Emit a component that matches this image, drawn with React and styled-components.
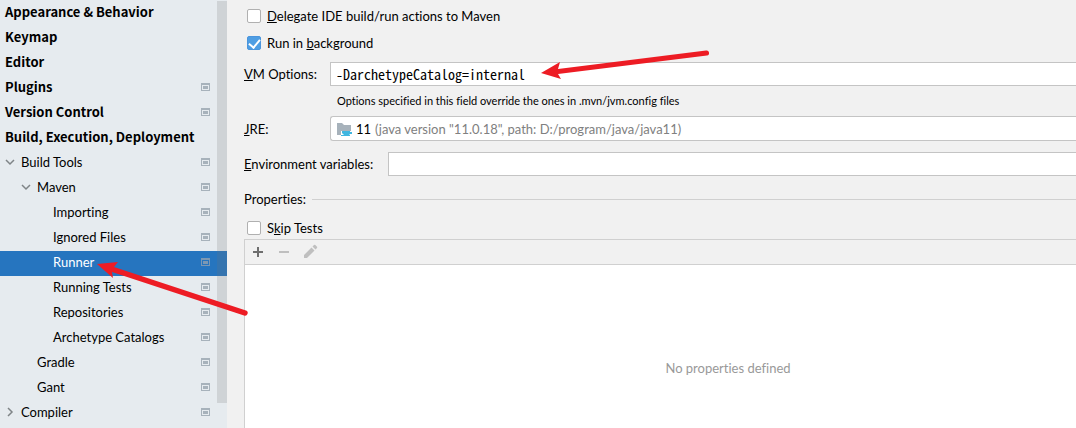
import {useState} from 'react';
import styled, {createGlobalStyle} from 'styled-components';

const GlobalStyle = createGlobalStyle`
    * {
        box-sizing: border-box;
    }

    body {
        margin: 0;
        overflow: hidden;
        background: #f1f1f1;
    }

    body, input, select, button {
        font-family: Lato, 'Noto Sans', sans-serif;
        font-size: 13px;
        font-variant-ligatures: none;
        color: #000;
    }
`;

//--------Layout--------//
const Page = styled.div`
    position: relative;
    display: flex;
    height: 100vh;
    overflow: hidden;
    line-height: 18px;
`;

const Sidebar = styled.nav`
    position: relative;
    flex: 0 0 227px;
    padding-top: 1px;
    background: #e6ebef;
`;

const ScrollThumb = styled.div`
    position: absolute;
    top: 1px;
    right: 0;
    width: 10px;
    height: 402px;
    background: rgba(115, 115, 115, 0.2);
`;

const Main = styled.main`
    flex: 1;
    min-width: 0;
    padding: 7px 0 0 17px;
`;

//--------Tree--------//
const TreeRow = styled.a`
    display: flex;
    align-items: center;
    height: 25px;
    padding: 0 17px 4px ${({$level}) => 5 + $level * 16}px;
    text-decoration: none;
    font-family: ${({$bold}) => ($bold ? "'Noto Sans CJK SC', 'Noto Sans', sans-serif" : 'inherit')};
    font-weight: ${({$bold}) => ($bold ? 700 : 400)};
    color: ${({$selected}) => ($selected ? '#fff' : '#000')};
    background: ${({$selected}) => ($selected ? '#2675bf' : 'transparent')};

    svg:last-child {
        margin-left: auto;
    }
`;

const Chevron = styled.svg`
    width: 10px;
    height: 10px;
    margin-left: -16px;
    margin-right: 6px;
    fill: none;
    stroke: #7f8487;
    stroke-width: 1.5;
`;

//--------Form--------//
const CheckRow = styled.label`
    display: flex;
    align-items: center;
    gap: 6px;
    height: 18px;
    margin-bottom: ${({$gap}) => $gap}px;
    padding-left: 3px;
`;

const Checkbox = styled.input`
    appearance: none;
    display: grid;
    place-items: center;
    width: 14px;
    height: 14px;
    margin: 0;
    border: 1px solid #b0b0b0;
    border-radius: 2px;
    background: #fff;

    &:checked {
        border-color: #4a95dd;
        background: #4f9ee3;
    }

    &:checked::after {
        content: '';
        width: 5px;
        height: 9px;
        margin-top: -2px;
        border: solid #fff;
        border-width: 0 2px 2px 0;
        transform: rotate(40deg);
    }
`;

const Field = styled.div`
    display: flex;
    align-items: center;
    margin-bottom: ${({$gap}) => $gap || 0}px;
`;

const Label = styled.label`
    flex: 0 0 ${({$wide}) => ($wide ? 144 : 86)}px;
`;

const TextInput = styled.input`
    flex: 1;
    min-width: 0;
    height: 24px;
    padding: 0 5px;
    border: 1px solid #c4c4c4;
    border-right: none;
    outline: none;
    background: #fff;
    font-family: 'Noto Sans Mono CJK SC', 'DejaVu Sans Mono', monospace;
    font-size: ${({$code}) => ($code ? 14 : 13)}px;
`;

const Hint = styled.p`
    height: 30px;
    margin: 0 0 0 93px;
    padding-top: 6px;
    font-size: 11px;
`;

const Combo = styled.div`
    display: flex;
    flex: 1;
    align-items: center;
    gap: 4px;
    height: 25px;
    padding-left: 5px;
    border: 1px solid #c4c4c4;
    border-right: none;
    border-radius: 3px 0 0 3px;
    background: #fff;
`;

const Select = styled.select`
    appearance: none;
    flex: 1;
    min-width: 0;
    padding: 0;
    border: none;
    outline: none;
    background: transparent;
    color: #808080;
`;

const SectionTitle = styled.h2`
    display: flex;
    align-items: center;
    gap: 6px;
    height: 18px;
    margin: 0 0 11px;
    font-size: 13px;
    font-weight: 400;

    &::after {
        content: '';
        flex: 1;
        height: 1px;
        background: #d0d0d0;
    }
`;

//the table is wider than the visible part of the dialog
const TablePanel = styled.section`
    margin-right: -136px;
    border: 1px solid #d0d0d0;
`;

const Toolbar = styled.div`
    display: flex;
    align-items: center;
    gap: 10px;
    height: 25px;
    padding-left: 5px;
    border-bottom: 1px solid #d0d0d0;
`;

const ToolButton = styled.button`
    display: flex;
    width: 16px;
    height: 16px;
    padding: 0;
    border: none;
    background: none;
    color: ${({disabled}) => (disabled ? '#bfbfbf' : '#6e6e6e')};
`;

const EmptyState = styled.div`
    display: flex;
    align-items: center;
    justify-content: center;
    height: 206px;
    background: #fff;
    color: #999;
`;

const Arrow = styled.svg`
    position: absolute;
    left: ${({$x}) => $x}px;
    top: ${({$y}) => $y}px;
    fill: #ed1c24;
    pointer-events: none;
`;

//--------Icons--------//
function ProjectIcon({selected}) {
    return (
        <svg width='9' height='8' viewBox='0 0 9 8' shapeRendering='crispEdges' fill={selected ? '#7c98b3' : '#a7b2bb'}>
            <path fillRule='evenodd' d='M0 0h9v8H0zM1 2v5h7V2z'/>
            <path d='M2 3h5v3H2z'/>
        </svg>
    );
}

function JdkIcon() {
    return (
        <svg width='16' height='16' viewBox='0 0 16 16'>
            <path fill='#a7b2bb' d='M1 2h5l2 2h7v6H5v4H1z'/>
            <path fill='#40b6e0' d='M6 10h8v1h2v2h-2l-1 1H8l-2-2zM5 14h9v1H5z'/>
        </svg>
    );
}

const treeItems = [
    {name: 'Appearance & Behavior', level: 0, bold: true},
    {name: 'Keymap', level: 0, bold: true},
    {name: 'Editor', level: 0, bold: true},
    {name: 'Plugins', level: 0, bold: true, icon: true},
    {name: 'Version Control', level: 0, bold: true, icon: true},
    {name: 'Build, Execution, Deployment', level: 0, bold: true},
    {name: 'Build Tools', level: 1, icon: true, chevron: 'down'},
    {name: 'Maven', level: 2, icon: true, chevron: 'down'},
    {name: 'Importing', level: 3, icon: true},
    {name: 'Ignored Files', level: 3, icon: true},
    {name: 'Runner', level: 3, icon: true},
    {name: 'Running Tests', level: 3, icon: true},
    {name: 'Repositories', level: 3, icon: true},
    {name: 'Archetype Catalogs', level: 3, icon: true},
    {name: 'Gradle', level: 2, icon: true},
    {name: 'Gant', level: 2, icon: true},
    {name: 'Compiler', level: 1, icon: true, chevron: 'right'},
];

function App() {

    const [selected, setSelected] = useState('Runner');
    const [delegate, setDelegate] = useState(false);
    const [background, setBackground] = useState(true);
    const [skipTests, setSkipTests] = useState(false);
    const [vmOptions, setVmOptions] = useState('-DarchetypeCatalog=internal');
    const [env, setEnv] = useState('');

    function handleSelect(e, name) {
        e.preventDefault()
        setSelected(name)
    };

    return (
        <Page>
            <GlobalStyle/>
            <Sidebar>
                {treeItems.map((item) => (
                    <TreeRow key={item.name} href='#' $level={item.level} $bold={item.bold} $selected={item.name === selected} onClick={(e) => handleSelect(e, item.name)}>
                        {item.chevron ? (
                            <Chevron viewBox='0 0 10 10'>
                                <path d={item.chevron === 'down' ? 'M1 3l4 4 4-4' : 'M3 1l4 4-4 4'}/>
                            </Chevron>
                        ) : null}
                        <span>{item.name}</span>
                        {item.icon ? <ProjectIcon selected={item.name === selected}/> : null}
                    </TreeRow>
                ))}
                <ScrollThumb/>
            </Sidebar>

            <Main>
                <CheckRow $gap={9}>
                    <Checkbox type='checkbox' checked={delegate} onChange={(e) => setDelegate(e.target.checked)}/>
                    <span><u>D</u>elegate IDE build/run actions to Maven</span>
                </CheckRow>
                <CheckRow $gap={10}>
                    <Checkbox type='checkbox' checked={background} onChange={(e) => setBackground(e.target.checked)}/>
                    <span>Run in <u>b</u>ackground</span>
                </CheckRow>
                <Field>
                    <Label htmlFor='vm-options'><u>V</u>M Options:</Label>
                    <TextInput id='vm-options' type='text' $code spellCheck={false} value={vmOptions} onChange={(e) => setVmOptions(e.target.value)}/>
                </Field>
                <Hint>Options specified in this field override the ones in .mvn/jvm.config files</Hint>
                <Field $gap={11}>
                    <Label htmlFor='jre'><u>J</u>RE:</Label>
                    <Combo>
                        <JdkIcon/>
                        <span>11</span>
                        <Select id='jre'>
                            <option>(java version "11.0.18", path: D:/program/java/java11)</option>
                        </Select>
                    </Combo>
                </Field>
                <Field $gap={14}>
                    <Label htmlFor='env' $wide><u>E</u>nvironment variables:</Label>
                    <TextInput id='env' type='text' value={env} onChange={(e) => setEnv(e.target.value)}/>
                </Field>
                <SectionTitle>Properties:</SectionTitle>
                <CheckRow $gap={2}>
                    <Checkbox type='checkbox' checked={skipTests} onChange={(e) => setSkipTests(e.target.checked)}/>
                    <span>S<u>k</u>ip Tests</span>
                </CheckRow>
                <TablePanel>
                    <Toolbar>
                        <ToolButton type='button' aria-label='Add'>
                            <svg width='16' height='16' viewBox='0 0 16 16' fill='currentColor'>
                                <path d='M7 3h2v4h4v2H9v4H7V9H3V7h4z'/>
                            </svg>
                        </ToolButton>
                        <ToolButton type='button' aria-label='Remove' disabled>
                            <svg width='16' height='16' viewBox='0 0 16 16' fill='currentColor'>
                                <path d='M3 7h10v2H3z'/>
                            </svg>
                        </ToolButton>
                        <ToolButton type='button' aria-label='Edit' disabled>
                            <svg width='16' height='16' viewBox='0 0 16 16' fill='currentColor'>
                                <path d='M2 11l7.500-7.500 3 3L5 14H2zM10.500 2.500L12 1q.7-.4 1.300 0L15 2.700q.4.700 0 1.300l-1.500 1.500z'/>
                            </svg>
                        </ToolButton>
                    </Toolbar>
                    <EmptyState>No properties defined</EmptyState>
                </TablePanel>
            </Main>

            <Arrow $x={540} $y={48} width='170' height='34' viewBox='540 48 170 34'>
                <path d='M541 73L560 62 558 69 706 50.500A2.500 2.500 0 0 1 707 55.500L558 74 561 79z'/>
            </Arrow>
            <Arrow $x={96} $y={258} width='154' height='60' viewBox='96 258 154 60'>
                <path d='M97 264L118 262 114 267 246 310.500A2.500 2.500 0 0 1 244 315.500L112 272 113 278z'/>
            </Arrow>
        </Page>
    );
};

export default App;
